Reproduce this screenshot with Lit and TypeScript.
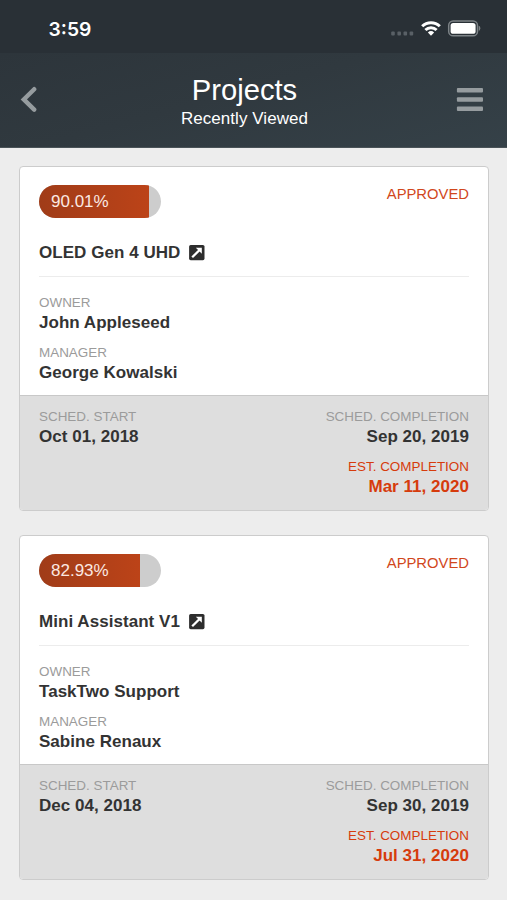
import { LitElement, html, css, svg } from "lit";
import { customElement, property } from "lit/decorators.js";

interface Project {
  progress: number;
  status: string;
  name: string;
  owner: string;
  manager: string;
  start: string;
  completion: string;
  estimate: string;
}

const projects: Project[] = [
  {
    progress: 90.01,
    status: "APPROVED",
    name: "OLED Gen 4 UHD",
    owner: "John Appleseed",
    manager: "George Kowalski",
    start: "Oct 01, 2018",
    completion: "Sep 20, 2019",
    estimate: "Mar 11, 2020",
  },
  {
    progress: 82.93,
    status: "APPROVED",
    name: "Mini Assistant V1",
    owner: "TaskTwo Support",
    manager: "Sabine Renaux",
    start: "Dec 04, 2018",
    completion: "Sep 30, 2019",
    estimate: "Jul 31, 2020",
  },
];

@customElement("status-bar")
export class StatusBar extends LitElement {
  static styles = css`
    :host {
      display: flex;
      justify-content: space-between;
      height: 53px;
      box-sizing: border-box;
      padding: 17px 26px 0 48.5px;
      background: #293036;
    }
    .time {
      font: 600 19.3px/24px Inter, sans-serif;
      color: #fff;
    }
    .icons {
      display: block;
      width: 92px;
      height: 22px;
      margin-top: 1px;
    }
  `;
  render() {
    return html`
      <span class="time">3:59</span>
      <svg class="icons" viewBox="389 18 92 22">
        ${[393, 399.2, 405.3, 411.4].map(
          (x) => svg`<rect x=${x - 1.8} y="31.6" width="3.6" height="3.8" rx="1" fill="#596066" />`
        )}
        <g fill="none" stroke="#fff" stroke-width="3">
          <path d="M422.2 26.3 A12.4 12.4 0 0 1 439.8 26.3" />
          <path d="M425.4 30 A8 8 0 0 1 436.6 30" />
        </g>
        <path d="M427.9 32.4 Q431 29.8 434.1 32.4 L431 35.7 Z" fill="#fff" />
        <rect x="448.7" y="21" width="28.8" height="14.8" rx="4.4" fill="none" stroke="#7d8387" stroke-width="1.5" />
        <rect x="450.6" y="23" width="25" height="10.8" rx="2.6" fill="#fff" />
        <path d="M479.2 26.2 Q481 28.2 479.2 30.4 Z" fill="#8d9296" stroke="#8d9296" stroke-width=".6" />
      </svg>
    `;
  }
}

@customElement("page-header")
export class PageHeader extends LitElement {
  static styles = css`
    :host {
      display: flex;
      justify-content: space-between;
      align-items: flex-start;
      height: 95px;
      box-sizing: border-box;
      padding: 0 24px 0 20px;
      border-bottom: 1px solid #4a5358;
      background: linear-gradient(165deg, #2d353b 0%, #30393f 45%, #354148 100%);
      color: #fff;
    }
    .titles {
      padding: 20px 14px 0 0;
      text-align: center;
    }
    .title {
      margin: 0;
      font-size: 29.2px;
      line-height: 34px;
      font-weight: 400;
    }
    .subtitle {
      margin: 1px 0 0;
      font-size: 17px;
      line-height: 22px;
      letter-spacing: 0.05px;
    }
    .back {
      width: 27px;
      height: 26px;
      margin-top: 33px;
    }
    .menu {
      width: 27px;
      height: 24px;
      margin-top: 35px;
    }
  `;
  render() {
    return html`
      <svg class="back" viewBox="0 0 27 26">
        <path d="M14.2 3.2 L3.8 13.4 L14.2 23.6" fill="none" stroke="#969c9f" stroke-width="4.4" stroke-linecap="round" />
      </svg>
      <div class="titles">
        <h1 class="title">Projects</h1>
        <p class="subtitle">Recently Viewed</p>
      </div>
      <svg class="menu" viewBox="0 0 27 24" fill="#969c9f">
        <rect x=".9" y="0" width="26.1" height="4.6" rx="1" />
        <rect x=".9" y="9.2" width="26.1" height="4.6" rx="1" />
        <rect x=".9" y="18.4" width="26.1" height="4.6" rx="1" />
      </svg>
    `;
  }
}

@customElement("labelled-value")
export class LabelledValue extends LitElement {
  @property() label = "";
  @property() value = "";
  static styles = css`
    :host {
      display: block;
      height: 40px;
    }
    .label {
      font-size: 13.45px;
      line-height: 20px;
      color: var(--label-color, #9b9b9b);
    }
    .value {
      font-size: 17px;
      line-height: 20px;
      font-weight: 700;
      letter-spacing: 0.03px;
      color: var(--value-color, #333);
    }
  `;
  render() {
    return html`<div class="label">${this.label}</div>
      <div class="value">${this.value}</div>`;
  }
}

@customElement("project-card")
export class ProjectCard extends LitElement {
  @property({ attribute: false }) project!: Project;
  static styles = css`
    :host {
      display: block;
      box-sizing: border-box;
      height: 345px;
      border: 1px solid #ccc;
      border-radius: 4px;
      overflow: hidden;
      background: #fff;
    }
    .body {
      box-sizing: border-box;
      height: 228px;
      padding: 18px 19px 0;
    }
    .top {
      display: flex;
      justify-content: space-between;
      align-items: flex-start;
    }
    .progress {
      width: 122px;
      height: 33px;
      border-radius: 17px;
      overflow: hidden;
      background: #cdcdcd;
    }
    .fill {
      height: 100%;
      box-sizing: border-box;
      padding-left: 12px;
      background: linear-gradient(90deg, #a03c18, #bc4318);
      color: #fbe9e2;
      font-size: 17px;
      line-height: 33px;
      white-space: nowrap;
    }
    .status {
      font-size: 14.8px;
      line-height: 18px;
      color: #d1471c;
    }
    .name {
      display: flex;
      align-items: center;
      gap: 9px;
      height: 42px;
      margin-top: 14px;
      padding-bottom: 2px;
      border-bottom: 1px solid #ececec;
      font-size: 17px;
      font-weight: 700;
      letter-spacing: 0.05px;
      color: #333;
    }
    .open {
      width: 16px;
      height: 16px;
    }
    .people {
      display: grid;
      gap: 10px;
      padding-top: 16px;
    }
    .dates {
      display: flex;
      justify-content: space-between;
      box-sizing: border-box;
      height: 115px;
      padding: 11px 19px 0;
      border-top: 1px solid #c8c8c8;
      background: #dedede;
    }
    .end {
      display: grid;
      align-content: start;
      gap: 10px;
      text-align: right;
    }
    .late {
      --label-color: #d63b0c;
      --value-color: #d63b0c;
    }
  `;
  render() {
    const p = this.project;
    return html`
      <section class="body">
        <div class="top">
          <div class="progress">
            <div class="fill" style="width:${p.progress}%">${p.progress}%</div>
          </div>
          <span class="status">${p.status}</span>
        </div>
        <div class="name">
          <span>${p.name}</span>
          <svg class="open" viewBox="0 0 16 16">
            <rect x=".1" y="0" width="15.4" height="15.2" rx="1.6" fill="#2d2d2d" />
            <path d="M3.2 12.3 L10.3 5.2" stroke="#fff" stroke-width="2.3" />
            <path d="M6.8 2.8 H12.8 V8.8 Z" fill="#fff" />
          </svg>
        </div>
        <div class="people">
          <labelled-value label="OWNER" value=${p.owner}></labelled-value>
          <labelled-value label="MANAGER" value=${p.manager}></labelled-value>
        </div>
      </section>
      <section class="dates">
        <labelled-value label="SCHED. START" value=${p.start}></labelled-value>
        <div class="end">
          <labelled-value label="SCHED. COMPLETION" value=${p.completion}></labelled-value>
          <labelled-value class="late" label="EST. COMPLETION" value=${p.estimate}></labelled-value>
        </div>
      </section>
    `;
  }
}

@customElement("app-root")
export class AppRoot extends LitElement {
  static styles = css`
    :host {
      display: block;
      height: 900px;
      overflow: hidden;
      background: #ededed;
      font-family: "Liberation Sans", Arial, sans-serif;
    }
    .list {
      display: grid;
      gap: 24px;
      padding: 18px 18px 0 19px;
    }
  `;
  render() {
    return html`
      <status-bar></status-bar>
      <page-header></page-header>
      <main class="list">
        ${projects.map((p) => html`<project-card .project=${p}></project-card>`)}
      </main>
    `;
  }
}
